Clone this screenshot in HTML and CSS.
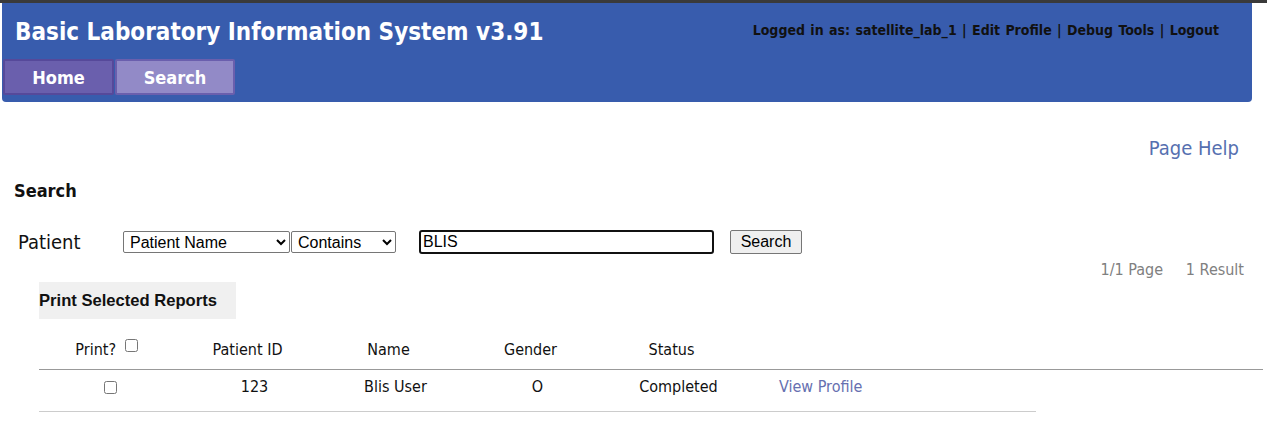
FILE: index.html
```html
<!DOCTYPE html>
<html>
<head>
<meta charset="utf-8">
<link rel="stylesheet" href="styles.css">
</head>
<body>
<div class="topstrip"></div>
<div class="header">
  <div class="header-top">
    <div class="title">Basic Laboratory Information System v3.91</div>
    <div class="userbar">Logged in as: satellite_lab_1 | Edit Profile | Debug Tools | Logout</div>
  </div>
  <div class="tabs">
    <a class="tab tab-home">Home</a>
    <a class="tab tab-search">Search</a>
  </div>
</div>
<div class="content">
  <div class="help-row"><a class="page-help">Page Help</a></div>
  <h2 class="section-title">Search</h2>
  <div class="search-row">
    <span class="patient-label">Patient</span>
    <select class="sel-field"><option>Patient Name</option></select>
    <select class="sel-op"><option>Contains</option></select>
    <input class="q" type="text" value="BLIS">
    <button class="btn-search">Search</button>
  </div>
  <div class="pager">1/1 Page &nbsp;&nbsp;&nbsp; 1 Result</div>
  <div class="print-box">Print Selected Reports</div>
  <table class="results">
    <colgroup>
      <col class="w-print"><col class="w-id"><col class="w-name"><col class="w-gender"><col class="w-status"><col>
    </colgroup>
    <thead>
      <tr>
        <th>Print? <input type="checkbox" class="cb"></th>
        <th>Patient ID</th>
        <th>Name</th>
        <th>Gender</th>
        <th>Status</th>
        <th class="c-action"></th>
      </tr>
    </thead>
    <tbody>
      <tr>
        <td class="c-print"><input type="checkbox" class="cb"></td>
        <td class="c-data">123</td>
        <td class="c-data">Blis User</td>
        <td class="c-data">O</td>
        <td class="c-data">Completed</td>
        <td class="c-action"><a class="view">View Profile</a></td>
      </tr>
    </tbody>
  </table>
  <div class="row-line"></div>
</div>
</body>
</html>
```
FILE: styles.css
```css
html, body { margin: 0; padding: 0; background: #fff; }
body { font-family: "DejaVu Sans Condensed", "DejaVu Sans", sans-serif; color: #111; }
.topstrip { height: 3px; background: #3a3a3a; }
.header {
  margin: 0 15px 0 2px;
  background: #385cad;
  height: 99px;
  border-radius: 0 0 4px 4px;
  box-sizing: border-box;
}
.header-top { display: flex; justify-content: space-between; align-items: flex-start; height: 56px; }
.title { color: #fff; font-weight: bold; font-size: 24px; padding: 15px 0 0 13px; }
.userbar { font-size: 14px; font-weight: bold; color: #111; padding: 19px 33px 0 0; word-spacing: 1px; }
.tabs { display: flex; gap: 1px; padding-left: 1px; }
.tab {
  display: flex; align-items: center; justify-content: center;
  height: 36px; box-sizing: border-box; color: #fff; font-weight: bold; font-size: 18px;
  border-radius: 2px;
}
.tab-home { width: 111px; background: #6a5fad; border: 2px solid #56499a; }
.tab-search { width: 120px; background: #928ac7; border: 2px solid #6a5fad; }
.help-row { display: flex; justify-content: flex-end; padding: 34px 28px 0 0; height: 25px; }
.page-help { color: #5670b0; font-size: 20px; }
.section-title { margin: 19px 0 0 14px; font-size: 18px; font-weight: bold; }
.search-row { display: flex; align-items: center; margin-top: 28px; height: 26px; }
.patient-label { font-size: 20px; width: 105px; padding-left: 18px; }
select {
  font-family: "Liberation Sans", Arial, sans-serif; font-size: 16px; height: 22px;
  border: 1px solid #767676; border-radius: 2px; background: #fff; color: #000; padding: 0 2px;
}
.sel-field { width: 167px; }
.sel-op { width: 105px; margin-left: 1px; }
.q {
  margin-left: 23px; width: 295px; height: 24px; box-sizing: border-box;
  border: 2px solid #111; border-radius: 3px; font-family: "Liberation Sans", Arial, sans-serif;
  font-size: 16px; padding: 0 2px;
}
.btn-search {
  margin-left: 16px; height: 24px; width: 72px; font-family: "Liberation Sans", Arial, sans-serif;
  font-size: 16px; background: #efefef; border: 1px solid #767676; border-radius: 2px; color: #000;
}
.pager { text-align: right; padding-right: 23px; color: #808080; font-size: 16px; margin-top: 5px; }
.print-box {
  margin: 3px 0 0 39px; width: 197px; height: 37px; box-sizing: border-box; background: #f0f0f0;
  font-family: "Liberation Sans", Arial, sans-serif; font-weight: bold; font-size: 16.6px;
  display: flex; align-items: center; padding-left: 0;
}
.results { margin: 11px 0 0 39px; border-collapse: collapse; width: 1224px; font-size: 16px; table-layout: fixed; }
.w-print { width: 142px; }
.w-id { width: 140px; }
.w-name { width: 142px; }
.w-gender { width: 142px; }
.w-status { width: 140px; }
.results th { font-weight: normal; height: 39px; text-align: center; border-bottom: 1px solid #999; padding: 0 7px 0 0; }
.results td { height: 33px; text-align: center; padding: 0 0 8px; }
.results td.c-data { padding-left: 7px; }
.results .c-action { text-align: left; padding-left: 34px; }
.cb { width: 13px; height: 13px; margin: 0 3px; vertical-align: middle; }
.results th .cb { vertical-align: top; margin: 0 0 0 4px; position: relative; top: -1px; }
.view { color: #6670b0; }
.row-line { margin-left: 39px; width: 997px; height: 1px; background: #ccc; }
```
